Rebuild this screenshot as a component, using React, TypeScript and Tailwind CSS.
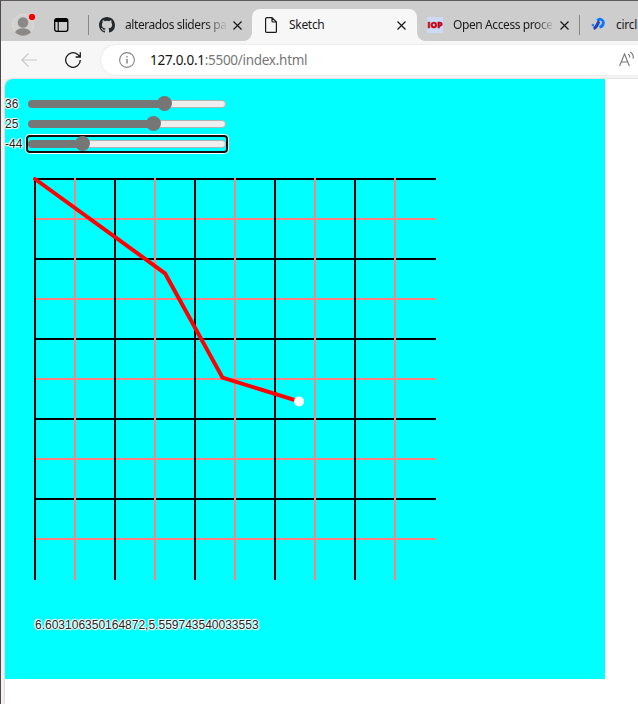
import React from "react";

const Close = () => (
  <svg className="h-[9px] w-[9px] shrink-0" viewBox="0 0 9 9" stroke="#161616" strokeWidth="1.2">
    <path d="M.5.5 8.5 8.5M8.5.5.5 8.5" />
  </svg>
);

function Tabs() {
  return (
    <header className="flex h-10 shrink-0 items-start bg-[#cdcdcd] text-[12px] leading-[16px] text-[#1b1b1b]">
      <svg className="ml-[11px] mt-3 h-6 w-[26px] shrink-0" viewBox="0 0 26 24">
        <circle cx="11" cy="12" r="10.6" fill="#d2d1cf" stroke="#dedbd6" />
        <circle cx="11" cy="9.5" r="5.3" fill="#8b8987" />
        <path d="M3 19.3c1.5-2.6 4.5-4 8-4s6.500 1.400 8 4a11 11 0 0 1-16 0z" fill="#8b8987" />
        <circle cx="20" cy="4" r="3.800" fill="#f00000" stroke="#dedede" strokeWidth="1" />
      </svg>
      <svg className="ml-4 mt-[17px] h-[15px] w-[15px] shrink-0" viewBox="0 0 15 15">
        <rect x=".7" y=".7" width="13.100" height="12.600" rx="2" fill="none" stroke="#000" strokeWidth="1.300" />
        <path d="M1 2.500a2 2 0 0 1 2-2h8.500a2 2 0 0 1 2 2V4H1z" />
        <path d="M4.200 4v9" stroke="#000" strokeWidth="1.100" />
      </svg>
      <div className="ml-[19px] mt-[14px] h-5 w-px shrink-0 bg-[#888]" />
      <svg className="ml-[10px] mt-4 h-4 w-4 shrink-0" viewBox="0 0 16 16" fill="#24292e">
        <path d="M8 0C3.580 0 0 3.580 0 8c0 3.540 2.290 6.530 5.470 7.590.4.070.55-.17.55-.38 0-.19-.01-.82-.01-1.490-2.010.37-2.530-.49-2.690-.94-.09-.23-.48-.94-.82-1.130-.28-.15-.68-.52-.01-.53.63-.01 1.080.58 1.230.82.72 1.210 1.870.87 2.330.66.07-.52.28-.87.51-1.070-1.780-.2-3.640-.89-3.640-3.950 0-.87.31-1.590.82-2.150-.08-.2-.36-1.020.08-2.120 0 0 .67-.21 2.200.82a7.600 7.600 0 0 1 4 0c1.530-1.040 2.200-.82 2.200-.82.44 1.100.16 1.920.08 2.120.51.56.82 1.270.82 2.150 0 3.070-1.870 3.750-3.650 3.950.29.25.54.73.54 1.480 0 1.070-.01 1.930-.01 2.200 0 .21.15.46.55.38A8.010 8.010 0 0 0 16 8c0-4.420-3.580-8-8-8z" />
      </svg>
      <div className="ml-[10px] mt-4 w-[101px] shrink-0 overflow-hidden whitespace-nowrap tracking-[-0.420px] [mask-image:linear-gradient(to_right,#000_80px,transparent_103px)]">alterados sliders pa</div>
      <div className="ml-[7px] mt-5 flex shrink-0"><Close /></div>
      <div className="relative ml-[10px] mt-2 flex h-8 w-[165px] shrink-0 items-start rounded-t-[8px] bg-[#f7f7f7]">
        <div className="absolute -left-2 bottom-0 h-2 w-2 bg-[radial-gradient(circle_at_0_0,#cdcdcd_7.500px,#f7f7f7_8px)]" />
        <div className="absolute -right-2 bottom-0 h-2 w-2 bg-[radial-gradient(circle_at_100%_0,#cdcdcd_7.500px,#f7f7f7_8px)]" />
        <svg className="ml-[13px] mt-2 h-4 w-3" viewBox="0 0 12 16" fill="none" stroke="#1b1b1b" strokeWidth="1.200">
          <path d="M2 .6H7L11.400 5v9.400a1 1 0 0 1-1 1H1.600a1 1 0 0 1-1-1V2A1.400 1.400 0 0 1 2 .6zM7 .6V4a1 1 0 0 0 1 1h3.400" />
        </svg>
        <div className="ml-3 mt-2 w-[100px] tracking-[-0.300px]">Sketch</div>
        <div className="ml-2 mt-3 flex"><Close /></div>
      </div>
      <div className="ml-[10px] mt-4 flex h-4 w-4 shrink-0 items-center justify-center bg-[#cddaf4] font-['Open_Sans',sans-serif] text-[8.500px] font-extrabold leading-none text-[#c40013] [-webkit-text-stroke:0.400px_#c40013]">IOP</div>
      <div className="ml-[10px] mt-4 w-[99px] shrink-0 overflow-hidden whitespace-nowrap tracking-[-0.400px] [mask-image:linear-gradient(to_right,#000_82px,transparent_102px)]">Open Access proce</div>
      <div className="ml-2 mt-5 flex shrink-0"><Close /></div>
      <div className="ml-[10px] mt-[14px] h-5 w-px shrink-0 bg-[#888]" />
      <svg className="ml-[11px] mt-4 h-4 w-[15px] shrink-0" viewBox="0 0 15 16" fill="none" strokeWidth="2.800">
        <path d="M6.300 3.400C9 .8 12.800 3 12.300 6.200 12 8.500 10.700 9.700 8.500 10.200" stroke="#0878ff" />
        <path d="M8.300 4.300C6.300 5.500 6.800 10 2.600 11.400" stroke="#2744b8" strokeWidth="3.200" />
        <circle cx="1.900" cy="8" r="1.300" fill="#1684ff" />
      </svg>
      <div className="ml-[10px] mt-4 shrink-0 whitespace-nowrap tracking-[-0.250px]">circl</div>
    </header>
  );
}

function AddressBar() {
  return (
    <div className="flex h-[38px] shrink-0 bg-[#f7f7f7]">
      <svg className="ml-5 mt-3 h-4 w-4 shrink-0" viewBox="0 0 16 16" fill="none" stroke="#c8c8c8" strokeWidth="1.200">
        <path d="M16 7H.8M7.500.5.8 7l6.700 6.500" />
      </svg>
      <svg className="ml-7 mt-[11px] h-4 w-4 shrink-0" viewBox="0 0 16 16" fill="none" stroke="#1b1b1b" strokeWidth="1.300">
        <path d="M15.300 8a7.300 7.300 0 1 1-2.600-5.600L15.300 5M15.300.3V5h-4.700" />
      </svg>
      <div className="ml-5 mt-[4px] flex h-[30px] grow rounded-l-full bg-white shadow-[0_0_2px_#d5d5d5]">
        <svg className="ml-[18px] mt-[7px] h-4 w-4 shrink-0" viewBox="0 0 16 16" fill="none" stroke="#858585" strokeWidth="1.100">
          <circle cx="8" cy="8" r="7.400" /><path d="M8 7v4.500M8 4.200v1.300" strokeWidth="1.500" />
        </svg>
        <div className="ml-[15px] mt-[5px] w-[460px] text-[13.500px] leading-5 text-[#777] tracking-[-0.280px]"><span className="text-[#151515]">127.0.0.1</span>:5500/index.html</div>
        <svg className="ml-[9px] mt-[6px] h-4 w-4 shrink-0" viewBox="0 0 16 16" fill="none" stroke="#777" strokeWidth="1.100">
          <path d="M.6 15 5.500 3l4.900 12M2.300 11h6.400M9.200 3c1.300.8 1.800 2 1.600 3.600M11.200 1c2.500 1.500 3.500 3.800 2.900 6.600" />
        </svg>
      </div>
    </div>
  );
}

const halo = "[text-shadow:0_0_1px_#fff,1px_0_1px_#fff,-1px_0_1px_#fff,0_1px_1px_#fff,0_-1px_1px_#fff,1px_1px_1px_#fff,-1px_-1px_1px_#fff]";

function Slider({ value, fill, focused = false }: { value: number; fill: number; focused?: boolean }) {
  return (
    <div className="flex h-5 items-center">
      <span className={`w-[23px] text-[12px] leading-4 text-[#222] ${halo}`}>{value}</span>
      <div className={`flex h-[14px] w-[198px] items-center rounded-[2px] ${focused ? "shadow-[0_0_0_2px_#101010,0_0_0_3px_#fff]" : ""}`}>
        <div className="relative h-2 w-full rounded-full border border-[#b2b2b2] bg-[#efefef]">
          <div className="absolute -left-px -top-px h-2 rounded-full bg-[#767676]" style={{ width: fill }} />
          <div className="absolute -top-[4.600px] h-[15px] w-[15px] rounded-full bg-[#767676]" style={{ left: fill - 8.5 }} />
        </div>
      </div>
    </div>
  );
}

const steps = Array.from({ length: 10 }, (_, i) => i);
const lineColor = (i: number) => (i % 2 ? "#ff8080" : "#000");

export default function App() {
  return (
    <div className="flex h-[704px] w-[638px] flex-col overflow-hidden border-l border-t border-l-[#4c484b] border-t-[#5e5a5e] bg-white font-['Noto_Sans',sans-serif]">
      <Tabs />
      <AddressBar />
      <div className="flex grow bg-[#f5f1f3] pl-1">
        <main className="grow rounded-tl-[8px] bg-white shadow-[0_0_2px_#aaa]">
          <div className="h-[600px] w-[600px] rounded-tl-[8px] bg-[#00ffff] pt-[15px] font-['Liberation_Sans',sans-serif] text-black">
            <Slider value={36} fill={136} />
            <Slider value={25} fill={125} />
            <Slider value={-44} fill={54} focused />
            <svg className="mt-[20px] block h-[410px] w-full" viewBox="0 95 600 410">
              {steps.map((i) => <path key={i} d={`M29 ${100 + i * 40}H431`} stroke={lineColor(i)} strokeWidth="2" />)}
              {steps.map((i) => <path key={i} d={`M${30 + i * 40} 99V501`} stroke={lineColor(i)} strokeWidth="2" />)}
              <path d="M30 100 160 194.300 217.500 298.600 294 322.400" fill="none" stroke="#ff0000" strokeWidth="4" strokeLinecap="round" strokeLinejoin="round" />
              <circle cx="294" cy="322.400" r="5" fill="#fff" />
            </svg>
            <div className={`ml-[30px] mt-[33px] text-[12px] leading-4 text-[#222] ${halo}`}>6.603106350164872,5.559743540033553</div>
          </div>
        </main>
      </div>
    </div>
  );
}
